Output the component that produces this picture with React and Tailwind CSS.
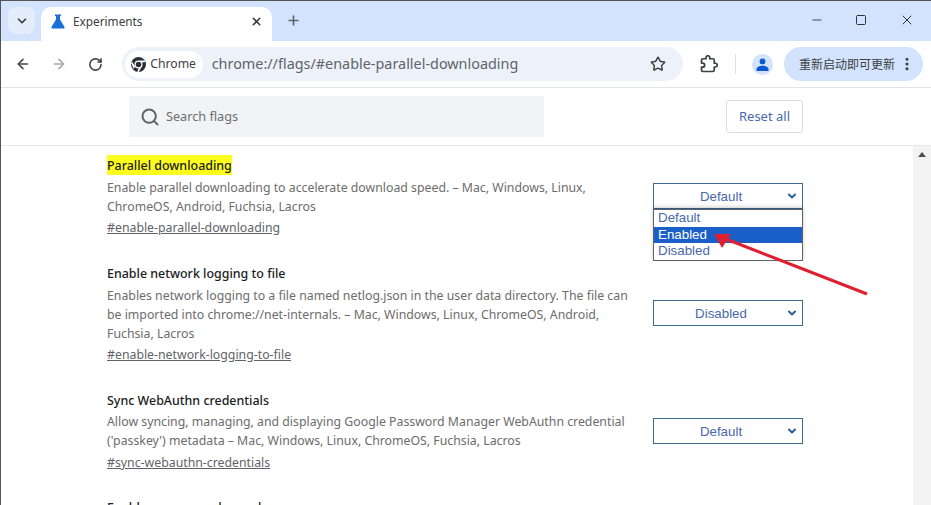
import React from 'react';
import { ArrowLeft, ArrowRight, ChevronDown, EllipsisVertical, Minus, Plus, RotateCw, Search, Square, Star, X } from 'lucide-react';

const Flask = () => (
  <svg width="14" height="15" viewBox="0 0 14 15" fill="#1a6fd8">
    <path d="M4 0.5h6v1.4H9v3.6l4.4 7.2c.5.9 0 1.8-1 1.8H1.6c-1 0-1.5-.9-1-1.8L5 5.5V1.9H4z" />
  </svg>
);

const ChromeLogo = () => (
  <svg width="15" height="15" viewBox="0 0 24 24">
    <circle cx="12" cy="12" r="12" fill="#2b2e33" />
    <circle cx="12" cy="12" r="6.4" fill="#fff" />
    <circle cx="12" cy="12" r="4.4" fill="#2b2e33" />
    <path d="M12 5.6L22 5.6 22.8 8 17.6 8.8A6.4 6.4 0 0 0 12 5.6z" fill="#fff" />
    <path d="M6.4 15.2L1.6 7 .4 10l4 9z" fill="#fff" />
    <path d="M12 18.4a6.4 6.4 0 0 0 5.5-3.2L12.4 24 10 23.6z" fill="#fff" />
  </svg>
);

const Extension = () => (
  <svg width="18" height="18" viewBox="0 0 24 24" fill="none" stroke="#3c4043" strokeWidth="2.3" strokeLinejoin="round">
    <path d="M20.5 11H19V7c0-1.1-.9-2-2-2h-4V3.5C13 2.12 11.88 1 10.5 1S8 2.12 8 3.5V5H4c-1.1 0-1.99.9-1.99 2v3.8H3.5c1.49 0 2.7 1.21 2.7 2.7s-1.21 2.7-2.7 2.7H2V20c0 1.1.9 2 2 2h13c1.1 0 2-.9 2-2v-4h1.5c1.38 0 2.5-1.12 2.5-2.5S21.88 11 20.5 11z" />
  </svg>
);

const Profile = () => (
  <span className="flex h-[21px] w-[21px] items-center justify-center rounded-full bg-[#d3e3fd]">
    <svg width="13" height="13" viewBox="0 0 13 13" fill="#0b57d0">
      <circle cx="6.5" cy="3.4" r="2.9" />
      <path d="M0.5 13v-1.6c0-2.4 3-3.7 6-3.7s6 1.3 6 3.7V13z" />
    </svg>
  </span>
);

const SelectBox = ({ value }) => (
  <div className="relative flex h-[26px] w-[150px] items-center justify-center border border-[#3b6a94] bg-white pt-px font-['Liberation_Sans',sans-serif] text-[13.33px] text-[#4a69ad]">
    <span className="pr-[14px]">{value}</span>
    <ChevronDown size={12} strokeWidth={4} className="absolute right-[4px] top-[6px] text-[#2c5f96]" />
  </div>
);

const flags = [
  {
    title: 'Parallel downloading',
    highlight: true,
    lines: ['Enable parallel downloading to accelerate download speed. – Mac, Windows, Linux,', 'ChromeOS, Android, Fuchsia, Lacros'],
    link: '#enable-parallel-downloading',
    value: 'Default',
    open: true,
    height: 'h-[108px]',
    descGap: 'mt-[3px]',
    linkGap: 'mt-[2px]',
    selectGap: 'mt-[28px]',
  },
  {
    title: 'Enable network logging to file',
    lines: ['Enables network logging to a file named netlog.json in the user data directory. The file can', 'be imported into chrome://net-internals. – Mac, Windows, Linux, ChromeOS, Android,', 'Fuchsia, Lacros'],
    link: '#enable-network-logging-to-file',
    value: 'Disabled',
    height: 'h-[127px]',
    descGap: 'mt-[3px]',
    linkGap: 'mt-[2px]',
    selectGap: 'mt-[37px]',
  },
  {
    title: 'Sync WebAuthn credentials',
    lines: ['Allow syncing, managing, and displaying Google Password Manager WebAuthn credential', "('passkey') metadata – Mac, Windows, Linux, ChromeOS, Fuchsia, Lacros"],
    link: '#sync-webauthn-credentials',
    value: 'Default',
    height: 'h-[107px]',
    descGap: 'mt-[2px]',
    linkGap: 'mt-[3px]',
    selectGap: 'mt-[28px]',
  },
];

const FlagRow = ({ flag }) => (
  <div className={`flex justify-between ${flag.height}`}>
    <div className="w-[530px]">
      <div className="flex h-[20px] items-center">
        <h2 className={`flex h-[20px] items-center pt-[2px] text-[12.45px] font-medium text-[#202124] ${flag.highlight ? 'bg-[#fdfd1e]' : ''}`}>{flag.title}</h2>
      </div>
      <div className={`${flag.descGap} text-[12.3px] leading-[19px] text-[#6c6c6c]`}>
        {flag.lines.map((line) => (
          <p key={line} className="whitespace-nowrap">{line}</p>
        ))}
      </div>
      <a className={`${flag.linkGap} block text-[12.3px] leading-[19px] text-[#5f6368] underline`}>{flag.link}</a>
    </div>
    <div className={`relative ${flag.selectGap}`}>
      <SelectBox value={flag.value} />
      {flag.open && (
        <div className="absolute left-0 top-[26px] w-[150px] border border-[#5f6368] bg-white font-['Liberation_Sans',sans-serif] text-[13.33px] leading-[16px] text-[#4a69ad] shadow-[0_-2px_4px_rgba(0,0,0,0.2)]">
          <div className="h-[17px] px-[4px]">Default</div>
          <div className="h-[16px] bg-[#1a5fc8] px-[4px] text-white">Enabled</div>
          <div className="h-[17px] px-[4px]">Disabled</div>
        </div>
      )}
    </div>
  </div>
);

export default function App() {
  return (
    <div className="flex h-[505px] w-[931px] flex-col overflow-hidden border-l border-[#555] bg-white font-['Noto_Sans','Noto_Sans_CJK_SC',sans-serif]">
      {/* tab strip */}
      <div className="flex h-[41px] shrink-0 items-end border-t border-[#555] bg-[#d3e3fd]">
        <div className="mb-[7px] ml-[7px] flex h-[27px] w-[27px] items-center justify-center rounded-lg bg-[#e4edfc] text-[#3c4043]">
          <ChevronDown size={14} strokeWidth={3} />
        </div>
        <div className="ml-[6px] flex h-[34px] w-[231px] items-start rounded-t-[10px] bg-white pl-[10px] pr-[9px] pt-[7px]">
          <Flask />
          <span className="ml-[8px] flex-1 text-[11.8px] leading-[15px] text-[#3c4043]">Experiments</span>
          <X size={13} strokeWidth={3} className="mt-px text-[#3c4043]" />
        </div>
        <Plus size={15} strokeWidth={2.6} className="mb-[13px] ml-[14px] text-[#5f6368]" />
        <div className="mb-[13px] ml-auto flex items-center text-[#333]">
          <Minus size={14} strokeWidth={1.5} className="mr-[31px]" />
          <Square size={12} strokeWidth={2} className="mr-[32px]" />
          <X size={16} strokeWidth={1.5} className="mr-[16px]" />
        </div>
      </div>

      {/* toolbar */}
      <div className="flex h-[47px] shrink-0 items-center border-b border-[#e3e3e3] pl-[14px] pr-[8px]">
        <ArrowLeft size={16} strokeWidth={2.4} className="text-[#44474a]" />
        <ArrowRight size={16} strokeWidth={2.2} className="ml-[20px] text-[#a5a7aa]" />
        <RotateCw size={15} strokeWidth={2.6} className="ml-[21px] text-[#44474a]" />
        <div className="ml-[19px] flex h-[34px] w-[565px] items-center rounded-full bg-[#edf2fa] pl-[3px] pr-[17px]">
          <div className="flex h-[27px] w-[78px] items-center justify-center gap-[4px] rounded-full bg-white text-[12.2px] text-[#3c4043]">
            <ChromeLogo />
            <span>Chrome</span>
          </div>
          <span className="ml-[9px] flex-1 whitespace-nowrap text-[14.4px] text-[#5f6368]">chrome://flags/#enable-parallel-downloading</span>
          <Star size={16} strokeWidth={2.2} className="text-[#3c4043]" />
        </div>
        <div className="ml-[17px]"><Extension /></div>
        <div className="ml-[17px] h-[20px] w-px bg-[#d3e3fd]" />
        <div className="ml-[16px]"><Profile /></div>
        <div className="ml-[11px] flex h-[34px] w-[140px] items-center rounded-full bg-[#d3e3fd] pl-[15px] text-[12px] text-[#3c4043]">
          <span className="whitespace-nowrap font-['Noto_Sans_CJK_SC',sans-serif]">重新启动即可更新</span>
          <EllipsisVertical size={16} strokeWidth={2.6} className="ml-[4px] text-[#3c4043]" />
        </div>
      </div>

      {/* search header */}
      <div className="flex h-[58px] shrink-0 items-center justify-between border-b border-[#e8e8e8] pl-[128px] pr-[128px]">
        <div className="flex h-[41px] w-[415px] items-center rounded-[2px] bg-[#f1f3f4] pl-[11px]">
          <Search size={20} strokeWidth={2.4} className="text-[#5f6368]" />
          <span className="ml-[6px] text-[12.7px] text-[#6c6f73]">Search flags</span>
        </div>
        <button className="h-[33px] w-[77px] rounded-[3px] border border-[#dadce0] bg-white text-[13px] text-[#4a69ad]">Reset all</button>
      </div>

      {/* flags list */}
      <div className="relative flex min-h-0 flex-1">
        <div className="flex-1 overflow-hidden pl-[106px] pr-[110px] pt-[9px]">
          {flags.map((flag) => (
            <FlagRow key={flag.link} flag={flag} />
          ))}
          <h2 className="pt-[2px] text-[12.45px] font-medium leading-[18px] text-[#202124]">Enable userspace dns cache</h2>
        </div>
        <div className="w-[18px] shrink-0 bg-[#f3f3f3] pt-[6px]">
          <div className="mx-auto h-0 w-0 border-x-[4px] border-b-[5px] border-x-transparent border-b-[#505050]" />
        </div>

        {/* red annotation arrow */}
        <svg className="pointer-events-none absolute left-[-1px] top-0" width="931" height="360" viewBox="0 146 931 360">
          <path d="M867 294L726 239" stroke="#e02030" strokeWidth="3" fill="none" />
          <path d="M714 234L731 234 722 248z" fill="#e02030" />
        </svg>
      </div>
    </div>
  );
}
